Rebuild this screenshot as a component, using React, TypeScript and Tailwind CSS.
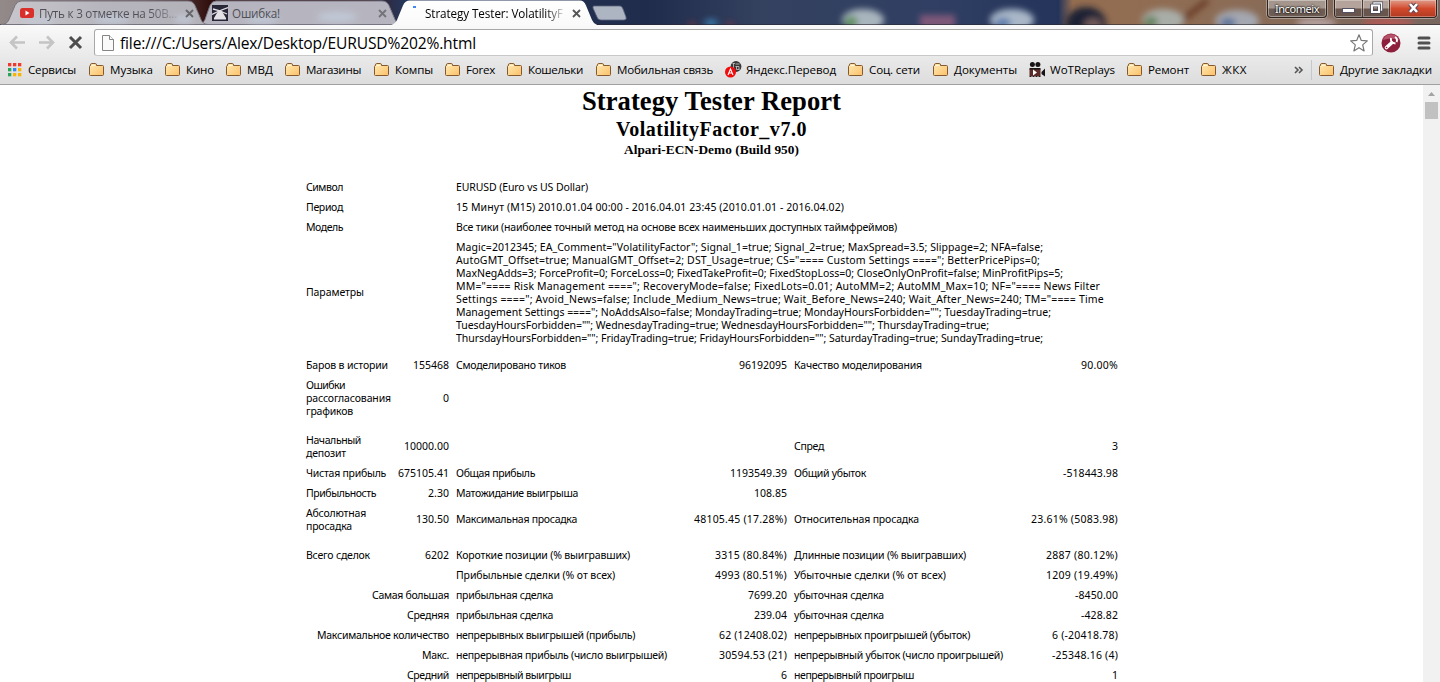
import { useLayoutEffect, useRef } from "react";

function Fit({ t, w, className = "" }: { t: string; w: number; className?: string }) {
  const ref = useRef<HTMLSpanElement>(null);
  useLayoutEffect(() => {
    const el = ref.current;
    if (!el) return;
    el.style.letterSpacing = "0px";
    const natural = el.getBoundingClientRect().width;
    el.style.letterSpacing = `${(w - natural) / t.length}px`;
  }, [t, w]);
  return (
    <span ref={ref} className={`inline-block whitespace-pre ${className}`}>
      {t}
    </span>
  );
}

function numberWidth(s: string) {
  let w = 0;
  for (const c of s) {
    if (c >= "0" && c <= "9") w += 6;
    else if (c === "%") w += 10;
    else if (c === "(" || c === ")" || c === "-") w += 4;
    else w += 3;
  }
  return w;
}

type Label = [string, number];
type Side = { left?: Label[]; value?: string; right?: Label };

const parameters: Label[] = [
  ['Magic=2012345; EA_Comment="VolatilityFactor"; Signal_1=true; Signal_2=true; MaxSpread=3.5; Slippage=2; NFA=false;', 587],
  ['AutoGMT_Offset=true; ManualGMT_Offset=2; DST_Usage=true; CS="==== Custom Settings ===="; BetterPricePips=0;', 584],
  ["MaxNegAdds=3; ForceProfit=0; ForceLoss=0; FixedTakeProfit=0; FixedStopLoss=0; CloseOnlyOnProfit=false; MinProfitPips=5;", 607],
  ['MM="==== Risk Management ===="; RecoveryMode=false; FixedLots=0.01; AutoMM=2; AutoMM_Max=10; NF="==== News Filter', 644],
  ['Settings ===="; Avoid_News=false; Include_Medium_News=true; Wait_Before_News=240; Wait_After_News=240; TM="==== Time', 648],
  ['Management Settings ===="; NoAddsAlso=false; MondayTrading=true; MondayHoursForbidden=""; TuesdayTrading=true;', 595],
  ['TuesdayHoursForbidden=""; WednesdayTrading=true; WednesdayHoursForbidden=""; ThursdayTrading=true;', 533],
  ['ThursdayHoursForbidden=""; FridayTrading=true; FridayHoursForbidden=""; SaturdayTrading=true; SundayTrading=true;', 587],
];

const header: { name: Label; lines: Label[] }[] = [
  { name: ["Символ", 37], lines: [["EURUSD (Euro vs US Dollar)", 132]] },
  { name: ["Период", 37], lines: [["15 Минут (M15) 2010.01.04 00:00 - 2016.04.01 23:45 (2010.01.01 - 2016.04.02)", 388]] },
  { name: ["Модель", 37], lines: [["Все тики (наиболее точный метод на основе всех наименьших доступных таймфреймов)", 441]] },
  { name: ["Параметры", 58], lines: parameters },
];

const rows: { gap?: string; cells: Side[] }[] = [
  { gap: "mt-[7px]", cells: [{ left: [["Баров в истории", 82]], value: "155468" }, { left: [["Смоделировано тиков", 110]], value: "96192095" }, { left: [["Качество моделирования", 128]], value: "90.00%" }] },
  { cells: [{ left: [["Ошибки", 39], ["рассогласования", 85], ["графиков", 47]], value: "0" }, {}, {}] },
  { gap: "mt-[9px]", cells: [{ left: [["Начальный", 55], ["депозит", 40]], value: "10000.00" }, {}, { left: [["Спред", 30]], value: "3" }] },
  { cells: [{ left: [["Чистая прибыль", 80]], value: "675105.41" }, { left: [["Общая прибыль", 79]], value: "1193549.39" }, { left: [["Общий убыток", 72]], value: "-518443.98" }] },
  { cells: [{ left: [["Прибыльность", 70]], value: "2.30" }, { left: [["Матожидание выигрыша", 122]], value: "108.85" }, {}] },
  { cells: [{ left: [["Абсолютная", 60], ["просадка", 46]], value: "130.50" }, { left: [["Максимальная просадка", 121]], value: "48105.45 (17.28%)" }, { left: [["Относительная просадка", 125]], value: "23.61% (5083.98)" }] },
  { gap: "mt-[9px]", cells: [{ left: [["Всего сделок", 64]], value: "6202" }, { left: [["Короткие позиции (% выигравших)", 174]], value: "3315 (80.84%)" }, { left: [["Длинные позиции (% выигравших)", 172]], value: "2887 (80.12%)" }] },
  { cells: [{}, { left: [["Прибыльные сделки (% от всех)", 159]], value: "4993 (80.51%)" }, { left: [["Убыточные сделки (% от всех)", 152]], value: "1209 (19.49%)" }] },
  { cells: [{ right: ["Самая большая", 77] }, { left: [["прибыльная сделка", 97]], value: "7699.20" }, { left: [["убыточная сделка", 90]], value: "-8450.00" }] },
  { cells: [{ right: ["Средняя", 42] }, { left: [["прибыльная сделка", 97]], value: "239.04" }, { left: [["убыточная сделка", 90]], value: "-428.82" }] },
  { cells: [{ right: ["Максимальное количество", 132] }, { left: [["непрерывных выигрышей (прибыль)", 179]], value: "62 (12408.02)" }, { left: [["непрерывных проигрышей (убыток)", 176]], value: "6 (-20418.78)" }] },
  { cells: [{ right: ["Макс.", 27] }, { left: [["непрерывная прибыль (число выигрышей)", 211]], value: "30594.53 (21)" }, { left: [["непрерывный убыток (число проигрышей)", 209]], value: "-25348.16 (4)" }] },
  { cells: [{ right: ["Средний", 42] }, { left: [["непрерывный выигрыш", 115]], value: "6" }, { left: [["непрерывный проигрыш", 120]], value: "1" }] },
];

function Lines({ items }: { items: Label[] }) {
  return (
    <div className="flex flex-col items-start">
      {items.map(([t, w]) => (
        <Fit key={t} t={t} w={w} />
      ))}
    </div>
  );
}

function Report() {
  return (
    <main className="min-w-0 flex-1 overflow-hidden bg-white text-black">
      <div className="flex flex-col items-center font-['Liberation_Serif',serif] font-bold">
        <h1 className="mt-[1px] h-[31px] text-[26.6px] leading-[31px]"><Fit t="Strategy Tester Report" w={259} /></h1>
        <h2 className="h-[24px] text-[20px] leading-[25px]"><Fit t="VolatilityFactor_v7.0" w={191} /></h2>
        <h3 className="h-[18px] text-[13.3px] leading-[17px]"><Fit t="Alpari-ECN-Demo (Build 950)" w={175} /></h3>
      </div>
      <div className="ml-[306px] mt-[18px] w-[812px] font-['Noto_Sans',sans-serif] text-[10.5px] leading-[13px]">
        {header.map(({ name, lines }) => (
          <div key={name[0]} className="flex items-center py-[3.5px]">
            <div className="w-[150px]"><Lines items={[name]} /></div>
            <Lines items={lines} />
          </div>
        ))}
        {rows.map(({ gap = "", cells }, i) => (
          <div key={i} className={`grid min-h-5 grid-cols-[143px_331px_324px] items-center gap-x-[7px] py-[3.5px] ${gap}`}>
            {cells.map((c, j) => (
              <div key={j} className="flex items-center justify-between">
                {c.left && <Lines items={c.left} />}
                {c.value && <Fit t={c.value} w={numberWidth(c.value)} />}
                {c.right && <Fit t={c.right[0]} w={c.right[1]} className="ml-auto" />}
              </div>
            ))}
          </div>
        ))}
      </div>
    </main>
  );
}

function Folder() {
  return (
    <svg width="16" height="14" viewBox="0 0 16 14" className="shrink-0">
      <defs>
        <linearGradient id="folder" x1="0" y1="0" x2="1" y2="1">
          <stop offset="0" stopColor="#ffebb5" />
          <stop offset="1" stopColor="#fcc068" />
        </linearGradient>
      </defs>
      <path d="M1.500 12.500q-1 0-1-1v-8q0-1 1-1V2q0-1.500 1.200-1.500h3.600Q7.500.5 7.500 2v.5h6q1 0 1 1v8q0 1-1 1z" fill="url(#folder)" stroke="#84592f" />
      <path d="M2.500 2.500h4" stroke="#fff7d8" />
    </svg>
  );
}

function Apps() {
  const colors = ["#f03a2e", "#f03a2e", "#f03a2e", "#2aa35a", "#3387f5", "#f8b400", "#2aa35a", "#f8b400", "#f8b400"];
  return (
    <svg width="14" height="14" viewBox="0 0 14 14" className="shrink-0">
      {colors.map((c, i) => (
        <rect key={i} x={(i % 3) * 5} y={Math.floor(i / 3) * 5} width="3.300" height="3.300" fill={c} />
      ))}
    </svg>
  );
}

function Translate() {
  return (
    <svg width="17" height="17" viewBox="0 0 17 17" className="shrink-0">
      <circle cx="11" cy="5.500" r="5.400" fill="#383838" />
      <path d="M7.500 2.500h2.500M8.500 2.500v6M10.500 3h4M10.500 5.500h3.500v3M11.500 5.500v3h3" stroke="#ccc" strokeWidth=".8" fill="none" />
      <circle cx="5.500" cy="11" r="5.500" fill="#f00c0c" />
      <path d="m3 14 2.500-6L8 14M4 12h3" fill="none" stroke="#fff" strokeWidth="1.100" />
    </svg>
  );
}

function Camera() {
  return (
    <svg width="17" height="16" viewBox="0 0 17 16" className="shrink-0">
      <g fill="#181315">
        <circle cx="3.400" cy="2.600" r="2.500" />
        <circle cx="8.900" cy="2.600" r="2.500" />
        <path d="M.5 6h11v2H.5zM12.500 10 16 6.500v8L12.500 12z" />
      </g>
      <path d="M.5 7.500h11V14H.5z" fill="#5a2b29" />
      <path d="m4 7.500 4 3-4 3z" fill="#fff" />
      <path d="M.5 14.500h11" stroke="#241a1c" strokeDasharray="2 1" />
    </svg>
  );
}

const bookmarks: { icon: "apps" | "folder" | "translate" | "camera"; slot: string; text: string; w: number }[] = [
  { icon: "apps", slot: "w-[81px]", text: "Сервисы", w: 48 },
  { icon: "folder", slot: "w-[76px]", text: "Музыка", w: 43 },
  { icon: "folder", slot: "w-[61px]", text: "Кино", w: 28 },
  { icon: "folder", slot: "w-[59px]", text: "МВД", w: 26 },
  { icon: "folder", slot: "w-[89px]", text: "Магазины", w: 55 },
  { icon: "folder", slot: "w-[71px]", text: "Компы", w: 38 },
  { icon: "folder", slot: "w-[62px]", text: "Forex", w: 29 },
  { icon: "folder", slot: "w-[89px]", text: "Кошельки", w: 55 },
  { icon: "folder", slot: "w-[129px]", text: "Мобильная связь", w: 96 },
  { icon: "translate", slot: "w-[123px]", text: "Яндекс.Перевод", w: 90 },
  { icon: "folder", slot: "w-[85px]", text: "Соц. сети", w: 51 },
  { icon: "folder", slot: "w-[96px]", text: "Документы", w: 63 },
  { icon: "camera", slot: "w-[98px]", text: "WoTReplays", w: 65 },
  { icon: "folder", slot: "w-[74px]", text: "Ремонт", w: 41 },
  { icon: "folder", slot: "w-[93px]", text: "ЖКХ", w: 25 },
];

function Bookmarks() {
  return (
    <nav className="flex h-[29px] items-center border-b border-[#a0a0a0] pb-px pl-2 text-[11.6px] leading-4 text-black">
      {bookmarks.map((b) => (
        <div key={b.text} className={`flex shrink-0 items-center ${b.slot}`}>
          <span className={`flex shrink-0 ${b.icon === "apps" ? "w-[20px]" : "w-[21px]"}`}>
            {b.icon === "apps" && <Apps />}
            {b.icon === "folder" && <Folder />}
            {b.icon === "translate" && <Translate />}
            {b.icon === "camera" && <Camera />}
          </span>
          <Fit t={b.text} w={b.w} />
        </div>
      ))}
      <svg width="10" height="8" viewBox="0 0 10 8" className="shrink-0" fill="none" stroke="#555" strokeWidth="1.600">
        <path d="m1 1 3 3-3 3M5 1l3 3-3 3" />
      </svg>
      <span className="ml-[7px] mr-[7px] h-[20px] w-px bg-[#c3c8ce]" />
      <span className="flex w-[21px] shrink-0"><Folder /></span>
      <Fit t="Другие закладки" w={92} />
    </nav>
  );
}

function Wallpaper() {
  return (
    <svg width="1440" height="30" viewBox="0 0 1440 30" preserveAspectRatio="none" className="absolute left-0 top-0">
      <defs>
        <linearGradient id="sky">
          <stop offset="0" stopColor="#938a8a" />
          <stop offset=".1" stopColor="#756163" />
          <stop offset=".145" stopColor="#32100f" />
          <stop offset=".25" stopColor="#3b1a1b" />
          <stop offset=".28" stopColor="#26365a" />
          <stop offset=".45" stopColor="#202c4b" />
          <stop offset=".53" stopColor="#34415f" />
          <stop offset=".65" stopColor="#303f63" />
          <stop offset=".735" stopColor="#24345a" />
          <stop offset=".745" stopColor="#946d50" />
          <stop offset=".86" stopColor="#8b6c56" />
          <stop offset="1" stopColor="#77655e" />
        </linearGradient>
        <filter id="soft" x="-50%" y="-50%" width="200%" height="200%"><feGaussianBlur stdDeviation="3" /></filter>
      </defs>
      <rect width="1440" height="30" fill="url(#sky)" />
      <g filter="url(#soft)">
        <ellipse cx="711" cy="23" rx="7" ry="4" fill="#3978a8" />
        <circle cx="692" cy="25" r="3" fill="#803848" />
        <circle cx="730" cy="25" r="3" fill="#803848" />
        <ellipse cx="863" cy="20" rx="21" ry="11" fill="#a9b5bd" />
        <ellipse cx="851" cy="22" rx="7" ry="6" fill="#5f9162" />
        <rect x="920" y="15" width="35" height="13" fill="#80597a" />
        <ellipse cx="1012" cy="20" rx="22" ry="11" fill="#a9b7c8" />
        <ellipse cx="1003" cy="23" rx="8" ry="5" fill="#5879ab" />
        <ellipse cx="1086" cy="24" rx="20" ry="17" fill="#1b2034" />
        <ellipse cx="1093" cy="25" rx="9" ry="7" fill="#705a5a" />
        <path d="m1170 30 38-30" stroke="#6b3d28" strokeWidth="6" />
        <ellipse cx="1163" cy="20" rx="21" ry="11" fill="#a9ada8" />
        <ellipse cx="1151" cy="22" rx="7" ry="6" fill="#688461" />
        <ellipse cx="1237" cy="21" rx="22" ry="11" fill="#a4a7b0" />
        <ellipse cx="1228" cy="23" rx="8" ry="5" fill="#586f9a" />
        <ellipse cx="1316" cy="23" rx="20" ry="5" fill="#b6a2a2" />
        <ellipse cx="1388" cy="23" rx="26" ry="5" fill="#b45a55" />
      </g>
      <path d="M0 24.500h1440" stroke="#292831" opacity=".6" />
    </svg>
  );
}

function TabShapes() {
  return (
    <svg width="640" height="26" viewBox="0 0 640 26" className="absolute left-0 top-0">
      <defs>
        <linearGradient id="idle" x1="0" x2="1" y1="0" y2="0">
          <stop offset="0" stopColor="#c9c7cc" />
          <stop offset=".5" stopColor="#b6b5bd" />
          <stop offset="1" stopColor="#b3b1b8" />
        </linearGradient>
        <linearGradient id="live" x1="0" x2="0" y1="0" y2="1">
          <stop offset="0" stopColor="#fff" />
          <stop offset="1" stopColor="#f9f9f9" />
        </linearGradient>
        <filter id="glow" x="-50%" y="-50%" width="200%" height="200%"><feGaussianBlur stdDeviation="3" /></filter>
      </defs>
      <path d="M197 24.500q6 0 8-5l5-14q2-4.500 6-4.500h166q5 0 7 4.500l6 14q2 5 7 5z" fill="#b6b5bf" stroke="#777784" />
      <path d="M1 24.500q6 0 8-5l6-14Q17 1 21 1h167q5 0 7 4.500l6 14q2 5 7 5z" fill="url(#idle)" stroke="#77737d" />
      <g filter="url(#glow)" fill="#c3cddc" opacity=".8">
        <ellipse cx="40" cy="20" rx="16" ry="3" />
        <ellipse cx="112" cy="19" rx="18" ry="4" />
        <ellipse cx="184" cy="19" rx="10" ry="4" />
        <ellipse cx="262" cy="19" rx="16" ry="4" />
        <ellipse cx="337" cy="17" rx="20" ry="5" />
      </g>
      <path d="M387 26q8-1 10-6l6-14.500q2-5 7-5h170q4 0 6 5L592 20q2 5 9 6z" fill="url(#live)" />
      <path d="M594 6h26q2 0 3 3l3 8q1 3-2 3h-23q-3 0-4-3l-4-9q-.500-2 1-2z" fill="#adb4c2" stroke="#5b667e" strokeWidth=".8" />
    </svg>
  );
}

function Close({ color }: { color: string }) {
  return (
    <svg width="9" height="9" viewBox="0 0 9 9" fill="none" stroke={color} strokeWidth="1.800" className="shrink-0">
      <path d="m1 1 7 7M8 1 1 8" />
    </svg>
  );
}

function WindowButtons() {
  return (
    <div className="absolute right-[3px] top-0 flex h-[18px] items-stretch gap-[7px]">
      <div className="flex w-[60px] items-center justify-center rounded-b-[4px] border border-t-0 border-[#2d2420] bg-linear-to-b from-[#a4968c] from-45% to-[#6d5c53] to-55% pt-px font-['Noto_Sans',sans-serif] text-[11px] text-white shadow-[inset_0_0_0_1px_#ffffff60,0_0_0_1px_#ffffff50] [text-shadow:0_0_2px_#000,0_0_2px_#000]">
        <Fit t="Incomeix" w={44} />
      </div>
      <div className="flex w-[103px] overflow-hidden rounded-b-[4px] border border-t-0 border-[#2d2420] shadow-[0_0_0_1px_#ffffff60]">
        <div className="flex w-[28px] items-center justify-center border-r border-[#4a3933] bg-linear-to-b from-[#b3a39b] from-45% to-[#68564e] to-55% shadow-[inset_0_0_0_1px_#ffffff50]">
          <svg width="13" height="6" viewBox="0 0 13 6" className="mt-[4px]"><rect x=".5" y=".5" width="12" height="4" fill="#fff" stroke="#525263" /></svg>
        </div>
        <div className="flex w-[27px] items-center justify-center border-r border-[#4a3933] bg-linear-to-b from-[#b3a39b] from-45% to-[#68564e] to-55% shadow-[inset_0_0_0_1px_#ffffff50]">
          <svg width="13" height="13" viewBox="0 0 13 13" fill="none" className="mb-[2px]">
            <path d="M4 4V2h7.500v7H9" stroke="#4a4b5c" strokeWidth="3" />
            <path d="M4 4V2h7.500v7H9" stroke="#fff" strokeWidth="1.500" />
            <rect x="2" y="4.500" width="7" height="6.500" stroke="#4a4b5c" strokeWidth="3.500" />
            <rect x="2" y="4.500" width="7" height="6.500" stroke="#fff" strokeWidth="2" />
          </svg>
        </div>
        <div className="flex flex-1 items-center justify-center bg-linear-to-b from-[#dd9a88] via-[#d2492c] via-50% to-[#b03a22] shadow-[inset_0_0_0_1px_#ffffff50]">
          <svg width="13" height="12" viewBox="0 0 13 12" fill="none" className="mb-[2px]">
            <path d="m3 2 7 8M10 2l-7 8" stroke="#5d4854" strokeWidth="4.500" />
            <path d="m3 2 7 8M10 2l-7 8" stroke="#fff" strokeWidth="2.600" />
          </svg>
        </div>
      </div>
    </div>
  );
}

function TabStrip() {
  return (
    <header className="relative h-[25px] overflow-hidden">
      <Wallpaper />
      <TabShapes />
      <div className="relative flex h-[26px] items-center text-[11.7px] leading-4">
        <div className="flex w-[192px] items-center pl-[20px] text-[#555]">
          <svg width="14" height="10" viewBox="0 0 14 10" className="mr-[5px] shrink-0"><rect width="14" height="10" rx="2.500" fill="#d9302c" /><path d="M5.500 2.500 9.500 5l-4 2.500z" fill="#fff" /></svg>
          <Fit t="Путь к 3 отметке на 50В..." w={138} className="bg-linear-to-r from-[#4f4f55] from-80% to-[#a4a4ad] bg-clip-text text-transparent" />
          <span className="ml-[8px]"><Close color="#66666c" /></span>
        </div>
        <div className="flex w-[195px] items-center pl-[20px] text-[#4f4f55]">
          <svg width="16" height="16" viewBox="0 0 16 16" className="mr-[4px] shrink-0">
            <rect width="16" height="16" fill="#292638" />
            <path d="M0 9.500 7 6l9-3.500M1 4l6 1.500L15 9" stroke="#e4e2e6" strokeWidth="1.300" fill="none" />
            <path d="M6.500 5.500 2 13v1.500h12V13L9.500 5.500z" fill="#e4e2e6" />
          </svg>
          <Fit t="Ошибка!" w={48} />
          <span className="ml-auto"><Close color="#73737b" /></span>
        </div>
        <div className="flex items-center pl-[26px] text-black">
          <span className="mb-[12px] mr-[9px] h-[2px] w-[3px] bg-[#4285f4]" />
          <Fit t="Strategy Tester: VolatilityF" w={138} className="bg-linear-to-r from-black from-85% to-[#ddd] bg-clip-text text-transparent" />
          <span className="ml-[9px]"><Close color="#555" /></span>
        </div>
      </div>
      <WindowButtons />
    </header>
  );
}

function Toolbar() {
  return (
    <div className="flex h-[31px] items-center pt-[4px]">
      <svg width="94" height="27" viewBox="0 0 94 27" fill="none" className="shrink-0">
        <g stroke="#c4c4c4" strokeWidth="2.600">
          <path d="M25 13.500H11.500M17 7.500l-6 6 6 6" />
          <path d="M39 13.500h13.500M47 7.500l6 6-6 6" />
        </g>
        <path d="m70 8 11 11M81 8 70 19" stroke="#4c4c4c" strokeWidth="3" />
      </svg>
      <div className="flex h-[27px] w-[1279px] shrink-0 items-center rounded-[3px] border border-[#a8a8a8] border-b-[#c8c8c8] bg-white pl-[7px] pr-[4px]">
        <svg width="12" height="16" viewBox="0 0 12 16" className="mr-[6px]" fill="#fafafa" stroke="#858585"><path d="M.5.5h7l4 4v11H.5z" /><path d="M7.500.5v4h4" /></svg>
        <Fit t="file:///C:/Users/Alex/Desktop/EURUSD%202%.html" w={356} className="text-[15.6px] leading-6" />
        <svg width="18" height="18" viewBox="0 0 18 18" className="ml-auto" fill="#fff" stroke="#777" strokeWidth="1.200" strokeLinejoin="round"><path d="m9 .8 2.300 5.600 6 .5-4.600 4 1.400 6L9 13.700l-5.100 3.200 1.400-6-4.600-4 6-.5z" /></svg>
      </div>
      <svg width="20" height="20" viewBox="0 0 20 20" className="ml-[8px] shrink-0">
        <circle cx="10" cy="10" r="9.500" fill="#8d1f3b" />
        <path d="M2 7a8.500 8.500 0 0 1 16 0Q10 4 2 7" fill="#b6536b" />
        <path d="m5.500 14.500 5-4.500" stroke="#fff" strokeWidth="3.600" strokeLinecap="round" />
        <path d="M10 5q-1 5 4.500 5.500M14 4q3 2 1.500 5" stroke="#fff" strokeWidth="1.900" fill="none" />
        <circle cx="5.500" cy="14.500" r=".8" fill="#8d1f3b" />
      </svg>
      <svg width="14" height="14" viewBox="0 0 14 14" className="ml-[16px] shrink-0" stroke="#505050" strokeWidth="3" strokeLinecap="round"><path d="M2 2h10M2 7h10M2 12h10" /></svg>
    </div>
  );
}

export default function App() {
  return (
    <div className="flex h-[682px] w-[1440px] flex-col overflow-hidden bg-white font-['Open_Sans',sans-serif]">
      <TabStrip />
      <div className="bg-linear-to-b from-[#f9f9f9] to-[#dcdcdc]">
        <Toolbar />
        <Bookmarks />
      </div>
      <div className="flex min-h-0 flex-1">
        <Report />
        <aside className="flex w-[17px] flex-col items-center bg-[#f1f1f1]">
          <svg width="7" height="4" viewBox="0 0 7 4" className="mt-[7px]"><path d="M0 4 3.500 0 7 4z" fill="#a3a3a3" /></svg>
          <span className="mt-[6px] h-[17px] w-[13px] bg-[#c1c1c1]" />
        </aside>
      </div>
    </div>
  );
}
